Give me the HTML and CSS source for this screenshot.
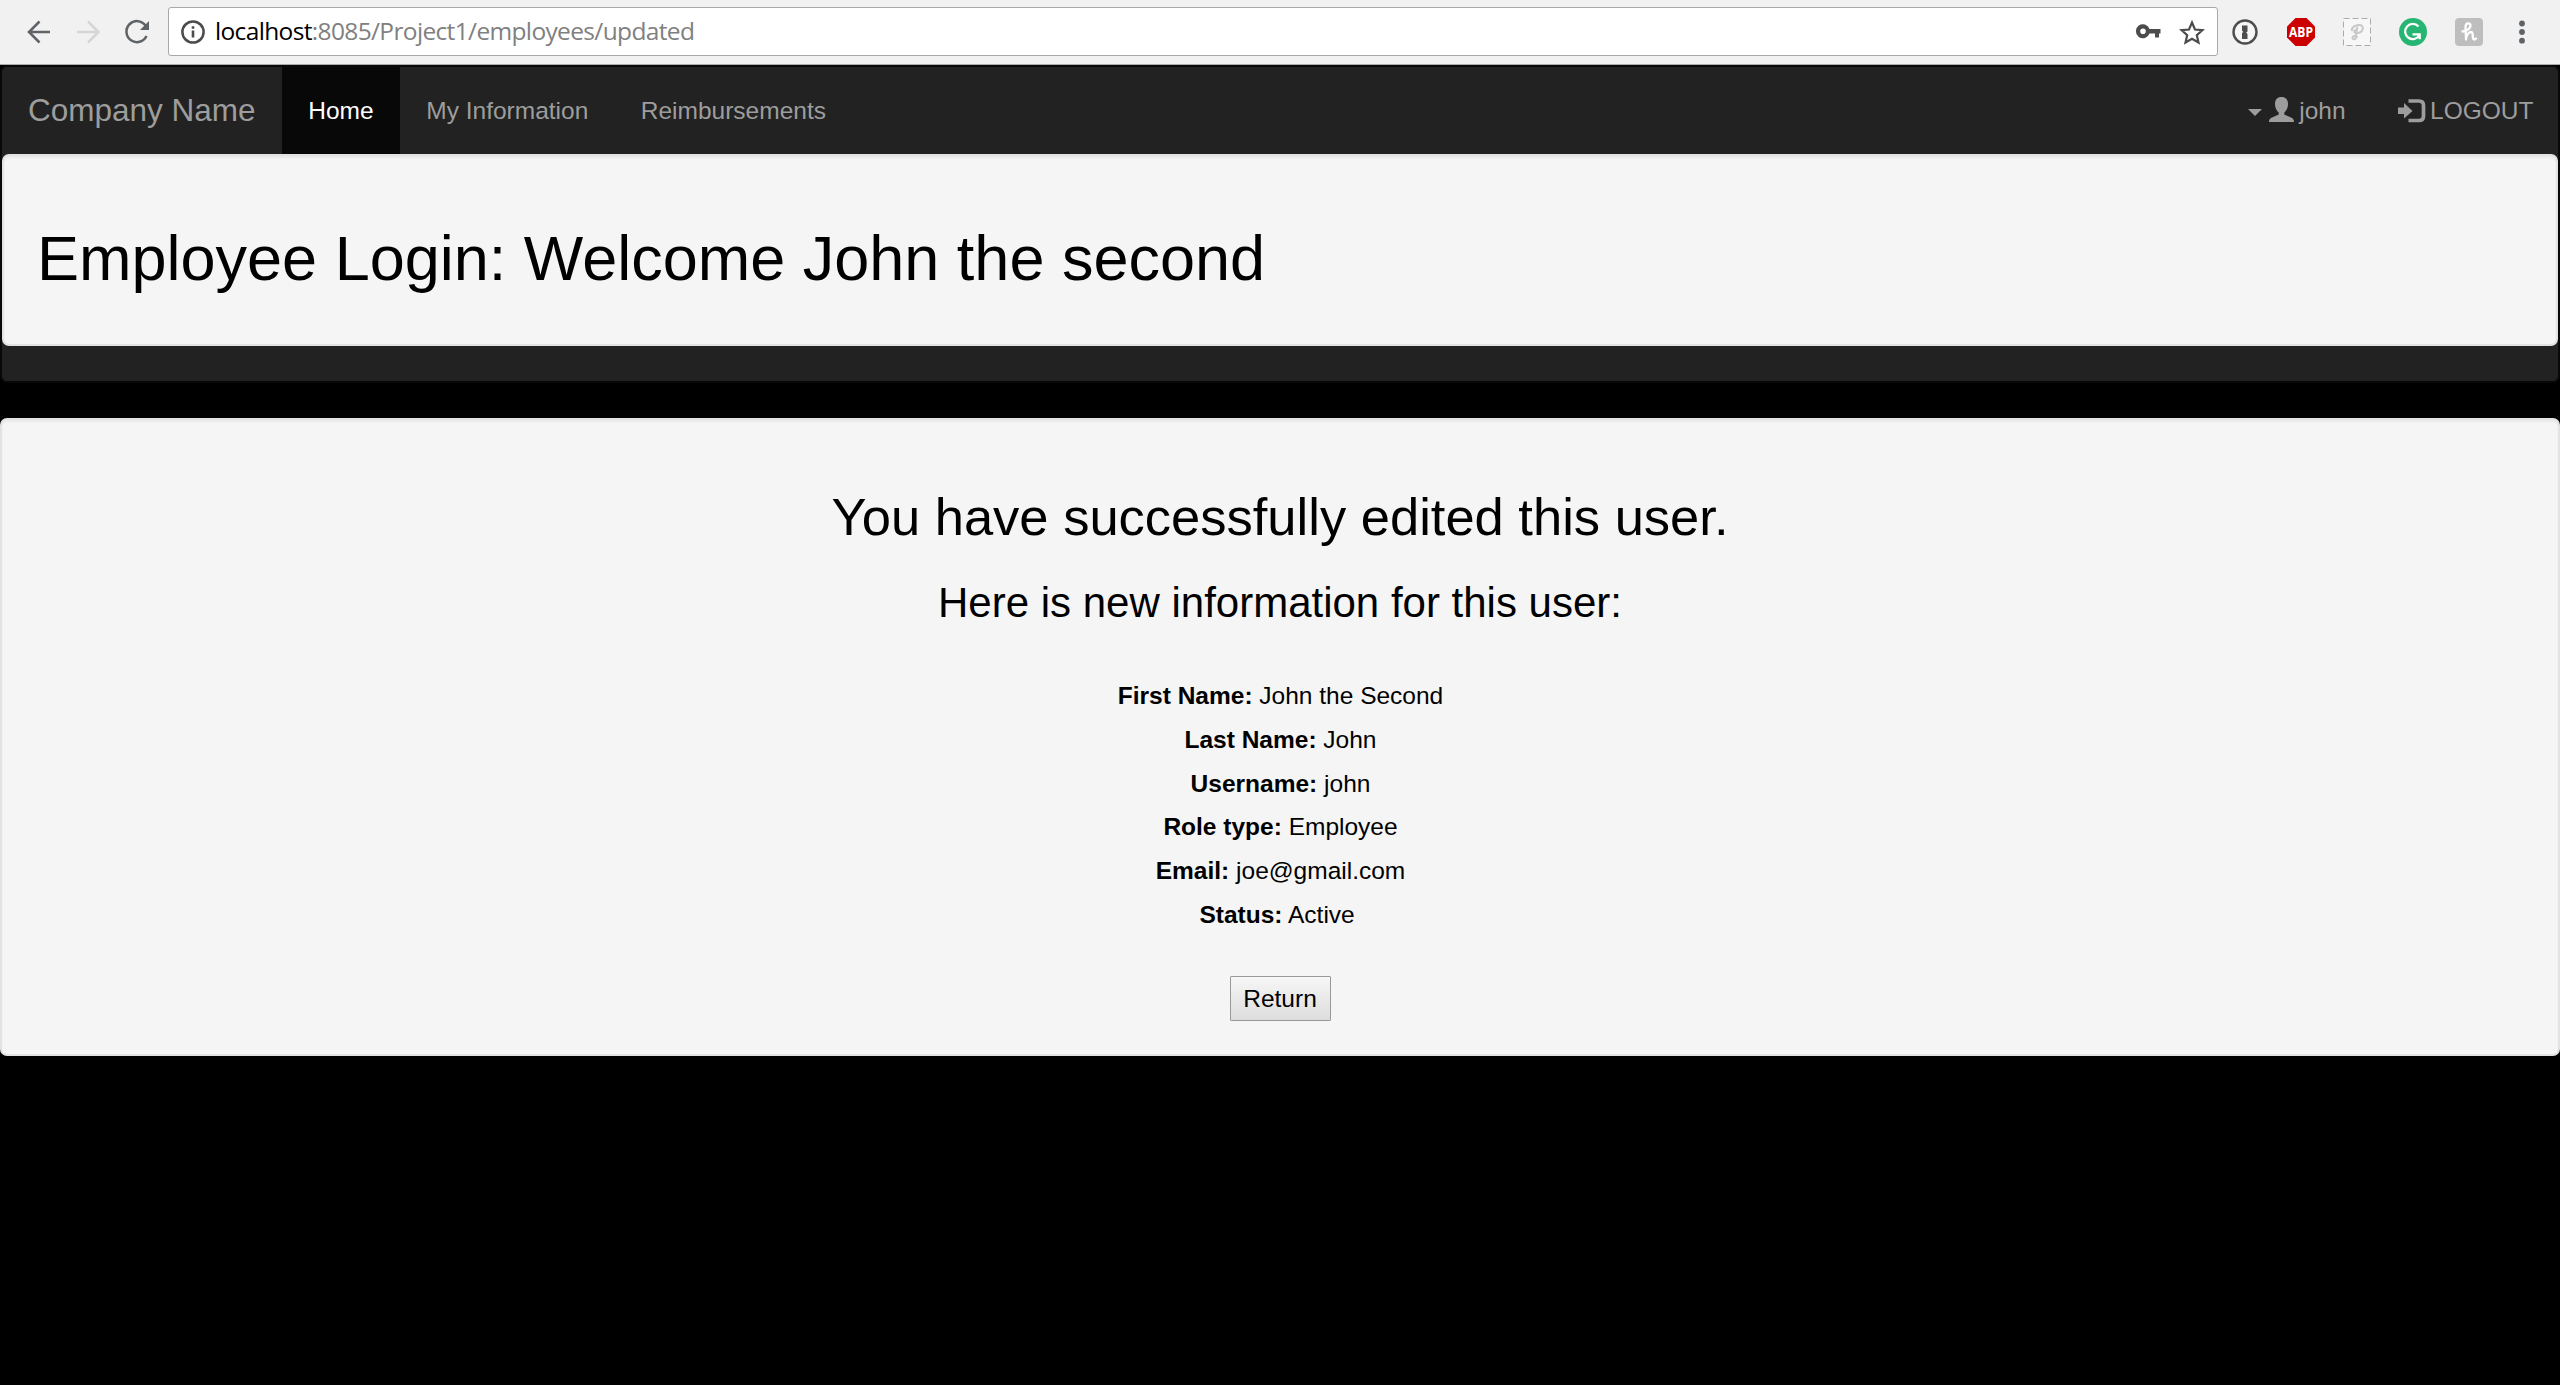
FILE: index.html
```html
<!DOCTYPE html>
<html lang="en">
<head>
<meta charset="utf-8">
<title>Employee Updated</title>
<link rel="stylesheet" href="styles.css">
</head>
<body>
<div class="toolbar">
  <svg class="nav-icons" width="168" height="64" viewBox="0 0 168 64" fill="none" stroke="#5f6368" stroke-width="2.5">
    <path d="M50 32H29M39.500 21.500L29 32l10.500 10.500"/>
    <path d="M77 32h21M88 21.500L98.500 32 88 42.500" stroke="#d5d6d7"/>
    <path d="M145.500 25.500A10.500 10.500 0 1 0 146.500 36"/>
    <path d="M149 21v9h-9z" fill="#5f6368" stroke="none"/>
  </svg>
  <div class="address">
    <svg class="info" width="24" height="24" viewBox="0 0 24 24"><circle cx="12" cy="12" r="10.600" fill="none" stroke="#4c4c4c" stroke-width="2.500"/><path d="M10.700 10.500h2.600v7h-2.600zM10.700 6.200h2.600v2.600h-2.600z" fill="#4c4c4c"/></svg>
    <span class="url"><span class="host">localhost</span>:8085/Project1/employees/updated</span>
    <svg class="marks" width="72" height="46" viewBox="2136 9 72 46">
      <path d="M2150.500 29a7 7 0 1 0 0 4.500h5.500v4h4v-4h1.500V29zM2144 28.400a2.800 2.800 0 1 1 0 5.600 2.800 2.800 0 0 1 0-5.600z" fill="#4c4c4c" fill-rule="evenodd"/>
      <path d="M2193 22.500l3 7 7.400.7-5.600 5 1.700 7.300-6.500-3.800-6.500 3.800 1.700-7.300-5.600-5 7.400-.7z" fill="none" stroke="#4c4c4c" stroke-width="2.200"/>
    </svg>
  </div>
  <svg class="extensions" width="342" height="64" viewBox="2218 0 342 64">
    <circle cx="2245" cy="32" r="11.500" fill="#f6f6f6" stroke="#4d4d4d" stroke-width="2.400"/>
    <path d="M2242 25.500h5.500v6l-1.300 1 1.300 1.500V39H2242v-6l1.300-1-1.300-1.500z" fill="#4d4d4d"/>
    <path d="M2295.500 18h11l8.500 8.500v11l-8.500 8.500h-11l-8.500-8.500v-11z" fill="#c00"/>
    <text x="2289" y="37.200" class="abp" textLength="24" lengthAdjust="spacingAndGlyphs">ABP</text>
    <rect x="2343.500" y="18.500" width="27" height="27" fill="#f7f7f7" stroke="#ababab" stroke-dasharray="6 3"/>
    <path d="M2352 31c-1-4 4-6.500 8-6 5 1 3 8-3 8-4 0-3-3-1-3M2357.500 26.500c-1 4-1.500 7-1.500 10 0 4-4 3-3.500 1 .5-2 4-2 5 0" fill="none" stroke="#c8c8c8" stroke-width="2"/>
    <circle cx="2413" cy="32" r="14" fill="#27b573"/>
    <path d="M2418.500 26.500a7.600 7.600 0 1 0 1 8.500M2412.500 34.300h7.200v5" fill="none" stroke="#fff" stroke-width="2.300"/>
    <rect x="2455" y="18" width="28" height="28" rx="4" fill="#bebebe"/>
    <path d="M2462.500 31.500c5-1 8-3.500 8-6 0-3.500-5-2.500-5 1.500l.5 12.500c.5-5 3-7.500 5-7.500 3.500 0 0 7.500 3.500 7.500l1.500-1" fill="none" stroke="#fff" stroke-width="2.300" stroke-linecap="round" stroke-linejoin="round"/>
    <g fill="#5f6368"><circle cx="2522" cy="23.500" r="2.900"/><circle cx="2522" cy="32" r="2.900"/><circle cx="2522" cy="40.700" r="2.900"/></g>
  </svg>
</div>
<nav class="navbar">
  <div class="navrow">
    <a class="brand">Company Name</a>
    <a class="link active">Home</a>
    <a class="link">My Information</a>
    <a class="link">Reimbursements</a>
    <div class="right">
      <a class="link user"><i class="caret"></i><svg width="25" height="25" viewBox="0 0 25 25"><path d="M12.500 0C8.500 0 6 2.500 6 7c0 4 1.600 6.500 3.700 8.500v2L2 21C.5 22 0 23 0 25h25c0-2-.5-3-2-4l-7.700-3.500v-2C17.400 13.500 19 11 19 7c0-4.500-2.500-7-6.500-7z" fill="#9d9d9d"/></svg>john</a>
      <a class="link logout"><svg width="28" height="24" viewBox="0 0 28 24"><path d="M0 8.500h6V4l8.500 8L6 19.500V15H0z" fill="#9d9d9d"/><path d="M10.500 2H21q4.500 0 4.500 4.500v10.500q0 4.500-4.500 4.500H10.500" fill="none" stroke="#9d9d9d" stroke-width="3.700"/></svg>LOGOUT</a>
    </div>
  </div>
  <header class="well"><h1>Employee Login: Welcome John the second</h1></header>
</nav>
<main class="well main">
  <h2>You have successfully edited this user.</h2>
  <h3>Here is new information for this user:</h3>
  <div class="details">
    <div><b>First Name:</b> John the Second</div>
    <div><b>Last Name:</b> John</div>
    <div><b>Username:</b> john</div>
    <div><b>Role type:</b> Employee</div>
    <div><b>Email:</b> joe@gmail.com</div>
    <div><b>Status:</b> Active&nbsp;</div>
  </div>
  <button class="return">Return</button>
</main>
</body>
</html>
```
FILE: styles.css
```css
* { box-sizing: border-box; }
html { background: #000; }
body { margin: 0; background: #000; color: #000; font: 24.5px/35px "Liberation Sans", Arial, sans-serif; }
svg { display: block; flex: none; }
.toolbar { display: flex; align-items: flex-start; height: 65px; background: #f1f1f1; border-bottom: 1px solid #aaa; }
.address { display: flex; align-items: center; flex: 1; height: 49px; margin-top: 7px; padding: 0 10px 0 12px; background: #fff; border: 1px solid #a8a8a8; border-radius: 3px; }
.url { flex: 1; margin-left: 10px; padding-bottom: 1px; font: 24.5px/36px "Open Sans", "Noto Sans", sans-serif; letter-spacing: -.65px; color: #808080; }
.host { color: #000; }
.abp { font: bold 15px "Open Sans", sans-serif; fill: #fff; }
.navbar { height: 318px; background: #222; border: 2px solid #080808; border-radius: 7px; }
.navrow { display: flex; height: 87px; line-height: 87px; color: #9d9d9d; }
.brand { width: 280px; padding-left: 26px; font-size: 31.5px; }
.link { padding: 0 26.25px; }
.active { width: 118px; background: #080808; color: #fff; }
.right { display: flex; margin-left: auto; }
.user, .logout { display: flex; align-items: center; }
.logout { padding-right: 24.5px; }
.user svg { margin: -3px 5px 0 7px; }
.logout svg { margin-right: 4px; }
.caret { margin-top: 4px; border: 7px solid transparent; border-top-color: #9d9d9d; border-bottom: 0; }
.well { background: #f5f5f5; border: 2px solid #e3e3e3; border-radius: 7px; box-shadow: inset 0 2px 2px rgba(0,0,0,.05); padding: 33px; }
header.well { height: 192px; }
h1, h2, h3 { margin: 0; font-weight: 400; }
h1 { margin-top: 34px; font-size: 63px; line-height: 70px; }
.main { display: flex; flex-direction: column; align-items: center; height: 638px; margin-top: 35px; }
h2 { margin-top: 34px; font-size: 52.5px; line-height: 59px; }
h3 { margin-top: 33px; font-size: 42px; line-height: 47px; }
.details { display: grid; row-gap: 8.75px; margin-top: 52px; padding-left: 1px; text-align: center; }
.return { width: 101px; height: 45px; margin-top: 44px; padding: 0; font: 24.5px/35px "Liberation Sans", Arial, sans-serif; color: #000; border: 1px solid #999; border-radius: 1px; background: linear-gradient(#f6f6f6, #ddd); }
```
